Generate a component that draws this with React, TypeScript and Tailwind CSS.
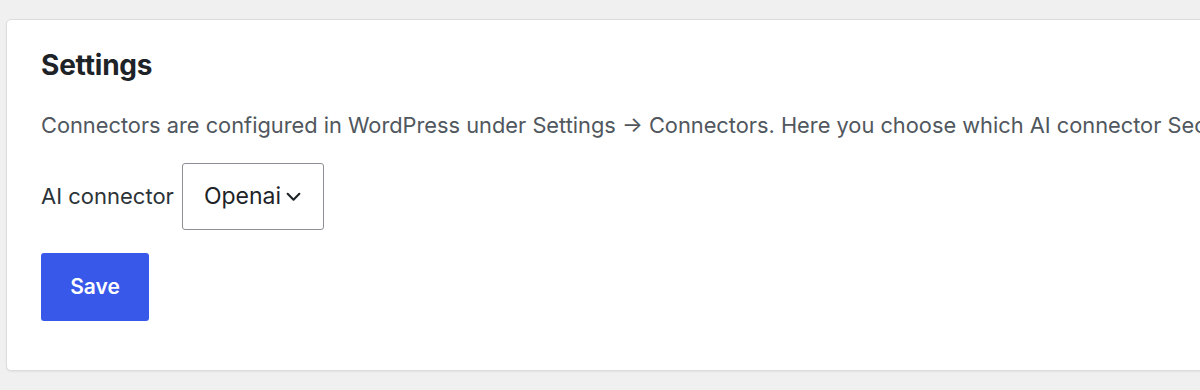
import React from "react";

export default function App() {
  return (
    <div
      className="w-[1200px] h-[390px] bg-[#f0f0f1] overflow-hidden pt-[19px] pl-[6px]"
      style={{ fontFamily: "Inter, 'Noto Sans', sans-serif" }}
    >
      <div className="w-[1230px] h-[352px] bg-white border border-[#dcdcde] rounded-[5px] shadow-[0_1px_2px_rgba(0,0,0,0.06)] pl-[34px] pt-[28px] overflow-hidden">
        <h2 className="text-[28px] leading-[34px] font-bold text-[#1d2327] tracking-[-0.2px]">Settings</h2>
        <p className="mt-[29px] text-[21.8px] leading-[28px] text-[#50575e] whitespace-nowrap">
          Connectors are configured in WordPress under Settings → Connectors. Here you choose which AI connector Secure Copy uses.
        </p>
        <div className="mt-[24px] flex items-center gap-[8px]">
          <span className="text-[22px] text-[#2c3338]">AI connector</span>
          <div className="w-[142px] h-[67px] border border-[#8c8f94] rounded-[3px] flex items-center pl-[21px] gap-[4px]">
            <span className="text-[23px] text-[#1d2327]">Openai</span>
            <svg width="17" height="17" viewBox="0 0 16 16" fill="none" stroke="#1d2327" strokeWidth="2" strokeLinecap="round" strokeLinejoin="round">
              <path d="M2.5 5.5 L8 11 L13.5 5.5" />
            </svg>
          </div>
        </div>
        <button className="mt-[23px] w-[108px] h-[68px] bg-[#3858e9] rounded-[3px] text-white text-[21px] font-semibold">
          Save
        </button>
      </div>
    </div>
  );
}
